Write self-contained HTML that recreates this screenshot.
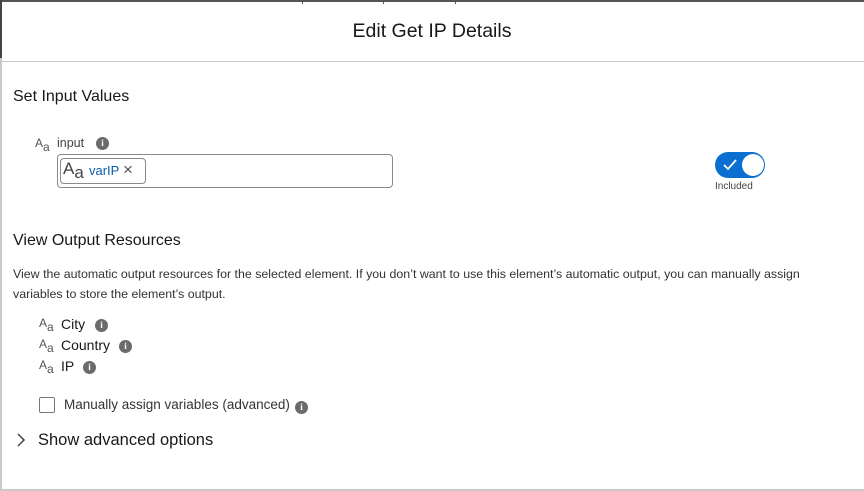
<!DOCTYPE html>
<html><head><meta charset="utf-8"><style>
body{margin:0;width:864px;height:491px;background:#fff;font-family:"Liberation Sans",sans-serif;color:#181818;position:relative;overflow:hidden}
.a{position:absolute;white-space:nowrap}
.i{position:absolute;width:13px;height:13px;border-radius:50%;background:#6b6b6b;color:#fff;font:bold 9px "Liberation Serif",serif;text-align:center;line-height:13px}
.aa{position:absolute;font-size:12px;color:#555}
.aa sub{font-size:12px;vertical-align:-4px}
</style></head><body>
<div class="a" style="left:0;top:0;width:864px;height:2px;background:#555"></div>
<div class="a" style="left:302px;top:0;width:1px;height:4px;background:#555"></div>
<div class="a" style="left:383px;top:0;width:1px;height:4px;background:#555"></div>
<div class="a" style="left:455px;top:0;width:1px;height:4px;background:#555"></div>
<div class="a" style="left:0;top:0;width:2px;height:491px;background:#c9c9c9"></div>
<div class="a" style="left:0;top:0;width:2px;height:58px;background:#444"></div>
<div class="a" style="left:0;top:61px;width:864px;height:1px;background:#c9c9c9"></div>
<div class="a" style="left:0;top:489px;width:864px;height:2px;background:#c9c9c9"></div>
<div class="a" style="left:0;top:20px;width:864px;text-align:center;font-size:19.5px">Edit Get IP Details</div>
<div class="a" style="left:13px;top:88px;font-size:16px">Set Input Values</div>
<div class="aa" style="left:35px;top:136px">A<sub>a</sub></div>
<div class="a" style="left:57px;top:136px;font-size:12.5px;color:#444">input</div>
<div class="i" style="left:96px;top:137px">i</div>
<div class="a" style="left:57px;top:154px;width:334px;height:32px;border:1px solid #8a8a8a;border-radius:4px"></div>
<div class="a" style="left:60px;top:158px;width:84px;height:24px;border:1px solid #8a8a8a;border-radius:4px"></div>
<div class="a" style="left:63px;top:159px;font-size:17px;color:#444">A<span style="font-size:17px;position:relative;top:4px">a</span></div>
<div class="a" style="left:89px;top:163px;font-size:13px;color:#0b5cab">varIP</div>
<div class="a" style="left:123px;top:160px;font-size:17px;color:#555">×</div>
<div class="a" style="left:715px;top:152px;width:50px;height:26px;border-radius:13px;background:#0b6fd1"></div>
<div class="a" style="left:742px;top:154px;width:22px;height:22px;border-radius:50%;background:#fff"></div>
<svg class="a" style="left:722px;top:158px" width="16" height="14"><path d="M2 7l4 4 8-9" stroke="#fff" stroke-width="1.8" fill="none"/></svg>
<div class="a" style="left:715px;top:181px;font-size:10px;color:#444">Included</div>
<div class="a" style="left:13px;top:232px;font-size:16px">View Output Resources</div>
<div class="a" style="left:13px;top:264px;font-size:12.4px;line-height:20px;color:#333">View the automatic output resources for the selected element. If you don’t want to use this element’s automatic output, you can manually assign<br>variables to store the element’s output.</div>
<div class="aa" style="left:39px;top:316px">A<sub>a</sub></div>
<div class="a" style="left:61px;top:316px;font-size:14px">City</div>
<div class="i" style="left:95px;top:319px">i</div>
<div class="aa" style="left:39px;top:337px">A<sub>a</sub></div>
<div class="a" style="left:61px;top:337px;font-size:14px">Country</div>
<div class="i" style="left:119px;top:340px">i</div>
<div class="aa" style="left:39px;top:358px">A<sub>a</sub></div>
<div class="a" style="left:61px;top:358px;font-size:14px">IP</div>
<div class="i" style="left:83px;top:361px">i</div>
<div class="a" style="left:39px;top:397px;width:14px;height:14px;border:1px solid #777;border-radius:2px"></div>
<div class="a" style="left:64px;top:397px;font-size:13.5px;color:#333">Manually assign variables (advanced)</div>
<div class="i" style="left:295px;top:401px">i</div>
<svg class="a" style="left:15px;top:432px" width="12" height="16"><path d="M3 2l6 6-6 6" stroke="#444" stroke-width="1.5" fill="none"/></svg>
<div class="a" style="left:38px;top:431px;font-size:16.5px">Show advanced options</div>
</body></html>
